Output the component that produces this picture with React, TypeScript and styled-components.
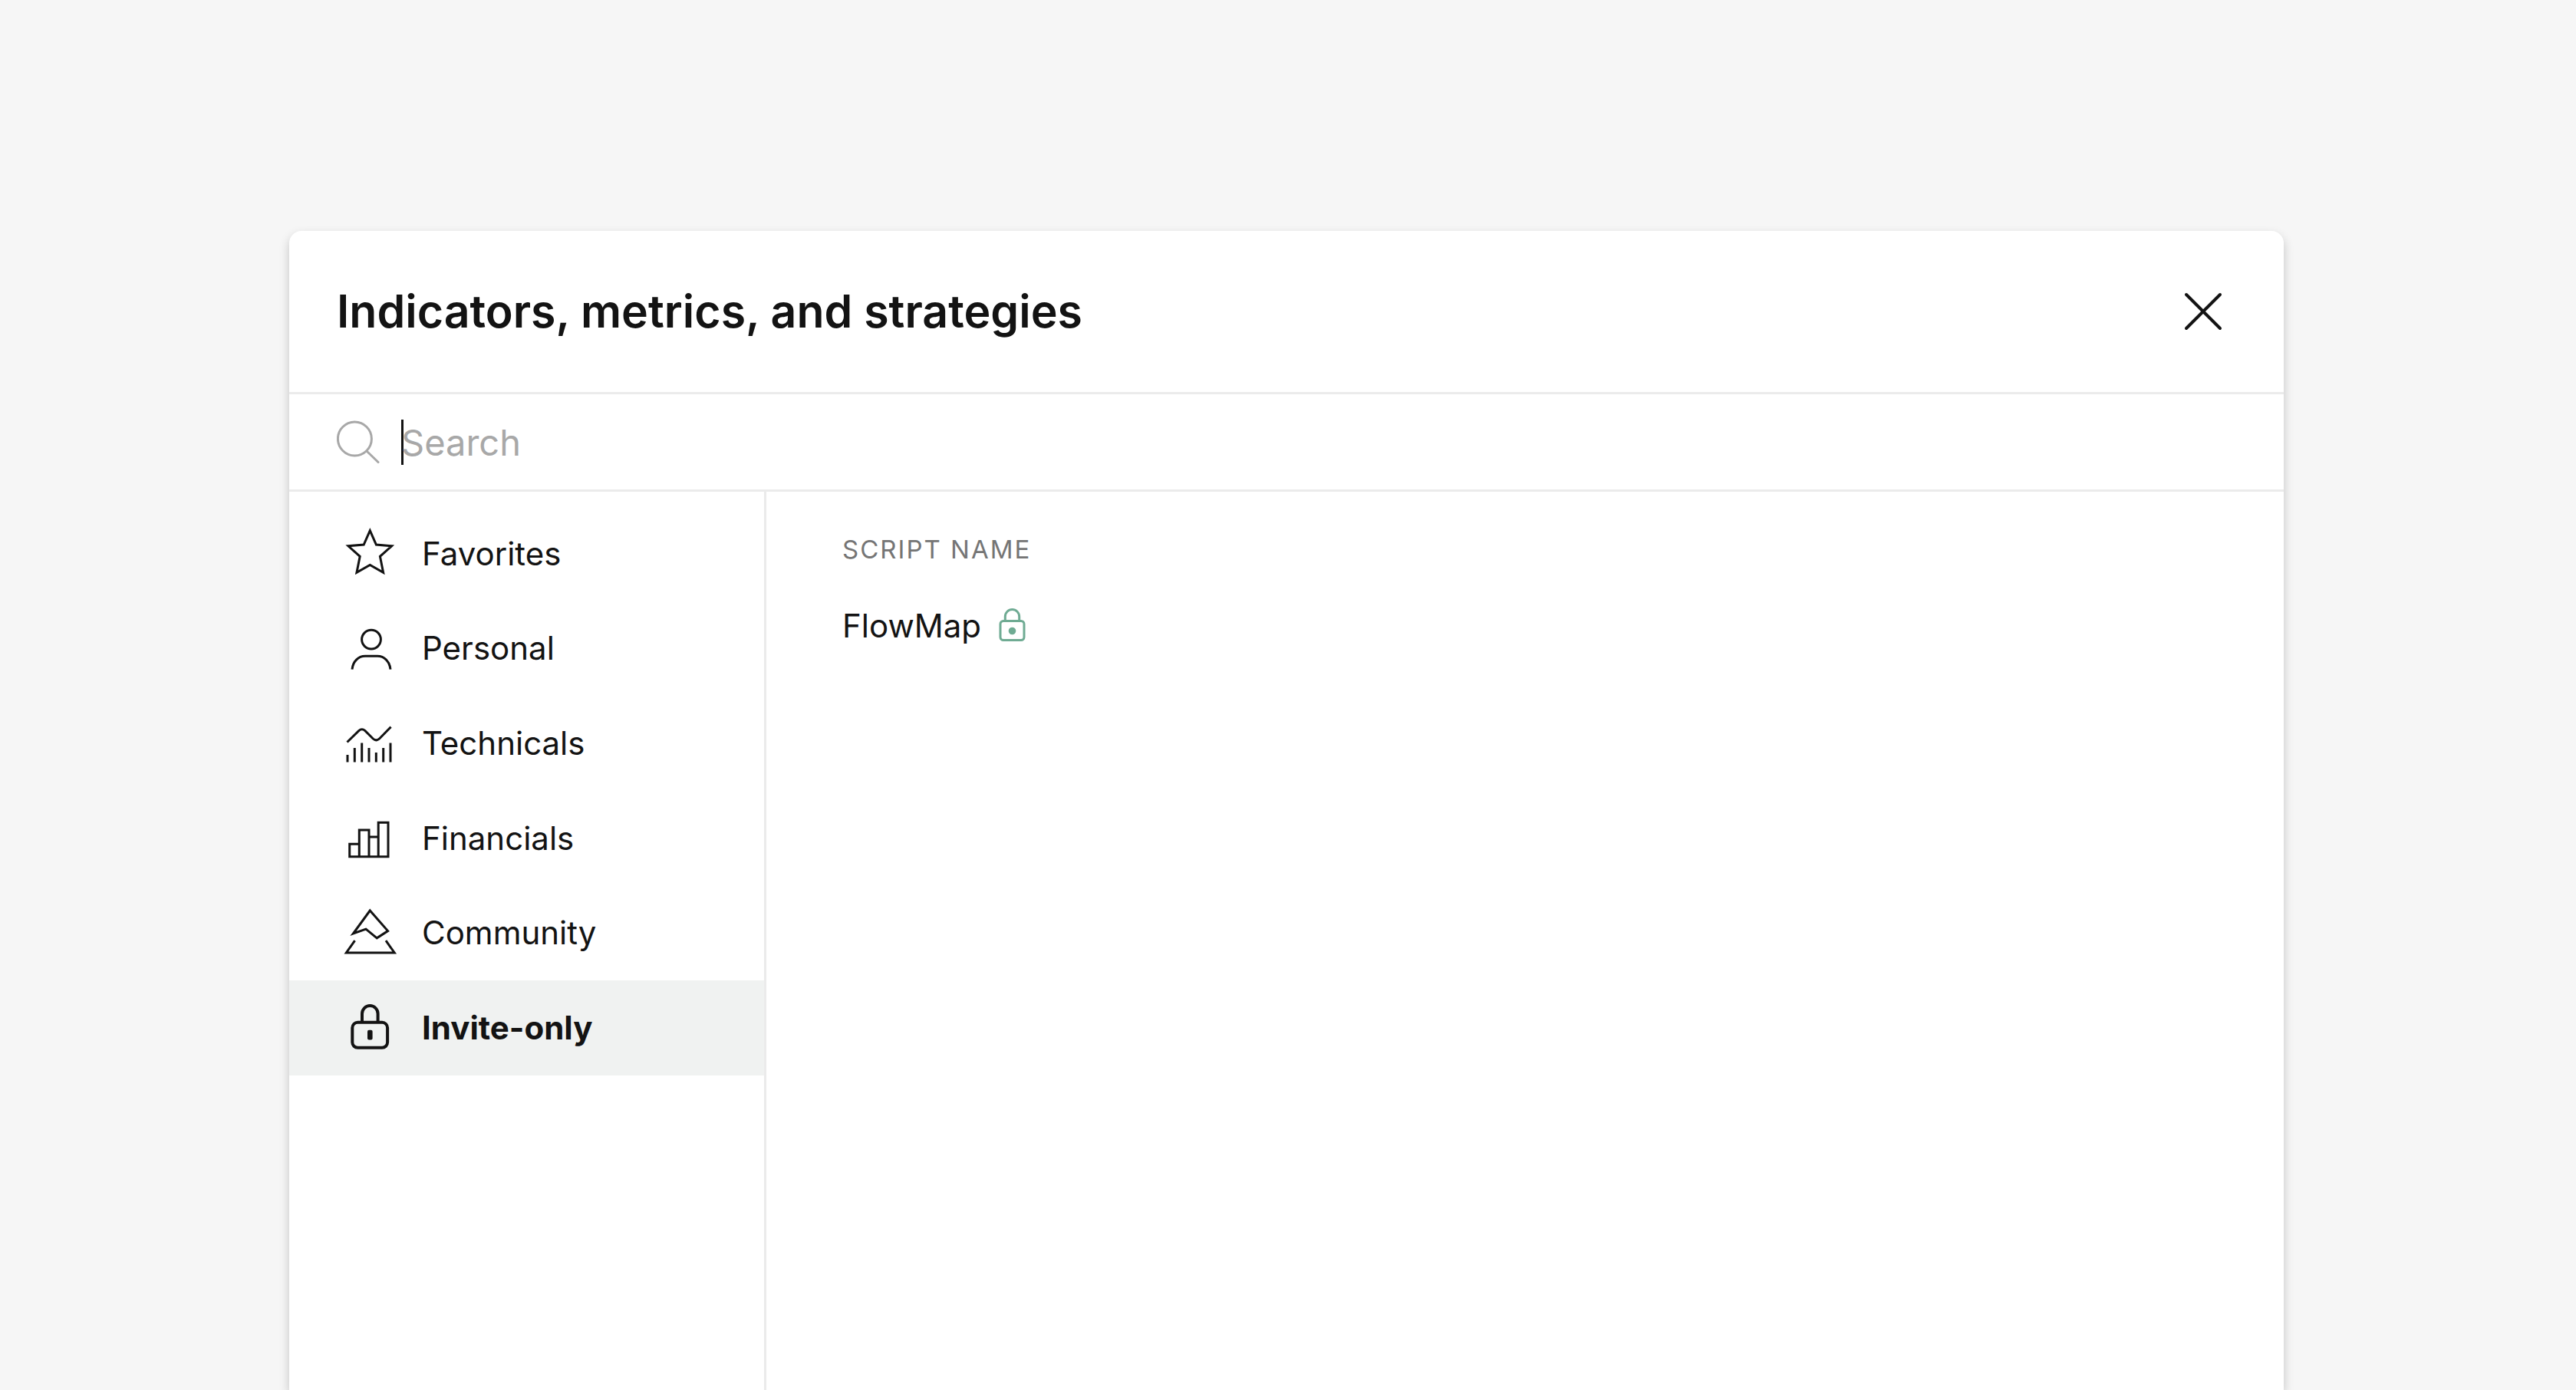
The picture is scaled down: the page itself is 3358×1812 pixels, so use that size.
import React, { useState } from "react";
import styled, { createGlobalStyle } from "styled-components";

const GlobalStyle = createGlobalStyle`
  *, *::before, *::after { box-sizing: border-box; }
  body {
    margin: 0;
    background: #f6f6f6;
    color: #131313;
    font-family: Inter, "Liberation Sans", sans-serif;
  }
  button, input { font: inherit; color: inherit; }
`;

const Page = styled.div`
  display: flex;
  min-height: 100vh;
  padding: 301px 381px 0 377px;
`;

const Dialog = styled.section`
  display: flex;
  flex: 1;
  flex-direction: column;
  min-width: 0;
  background: #fff;
  border-radius: 16px 16px 0 0;
  box-shadow: 0 6px 14px rgba(0, 0, 0, 0.2);
`;

const Header = styled.header`
  display: flex;
  align-items: center;
  justify-content: space-between;
  height: 213px;
  padding: 0 64px 0 62px;
  border-bottom: 3px solid #ebebeb;
`;

const Title = styled.h1`
  margin: 0;
  font-size: 59px;
  font-weight: 600;
  line-height: 82px;
`;

const CloseButton = styled.button`
  display: flex;
  padding: 0;
  border: 0;
  background: none;
  cursor: pointer;
`;

const SearchBar = styled.label`
  display: flex;
  align-items: center;
  height: 127px;
  padding: 0 62px;
  border-bottom: 3px solid #ebebeb;
`;

const SearchIcon = styled.svg`
  flex: none;
  margin-right: 28px;
  color: #a8a8a8;
`;

const Caret = styled.span`
  flex: none;
  width: 3px;
  height: 59px;
  margin-right: -3px;
  background: #131313;
`;

const SearchInput = styled.input`
  flex: 1;
  min-width: 0;
  height: 64px;
  padding: 0;
  border: 0;
  outline: 0;
  background: none;
  font-size: 47px;
  &::placeholder { color: #a8a8a8; opacity: 1; }
`;

const Body = styled.div`
  display: flex;
  flex: 1;
`;

const Sidebar = styled.nav`
  flex: none;
  width: 622px;
  padding-top: 19px;
  border-right: 3px solid #ebebeb;
`;

const CategoryList = styled.ul`
  display: grid;
  grid-auto-rows: 1fr;
  min-height: 742px;
  margin: 0;
  padding: 0;
  list-style: none;
`;

const Category = styled.button<{ $active: boolean }>`
  display: flex;
  align-items: center;
  gap: 31px;
  width: 100%;
  height: 100%;
  padding: 0 68px;
  border: 0;
  background: ${(p) => (p.$active ? "#f0f2f1" : "transparent")};
  font-size: 42px;
  font-weight: ${(p) => (p.$active ? 700 : 400)};
  line-height: 56px;
  text-align: left;
  cursor: pointer;
`;

const Content = styled.main`
  flex: 1;
  padding: 47px 99px;
`;

const ScriptTable = styled.table`
  width: 100%;
  border-collapse: collapse;
  text-align: left;
`;

const HeadCell = styled.th`
  height: 56px;
  padding: 0;
  color: #757575;
  font-size: 33px;
  font-weight: 400;
  letter-spacing: 2px;
  line-height: 56px;
  text-transform: uppercase;
`;

const ScriptCell = styled.td`
  padding: 44px 0 0;
  font-size: 42px;
  line-height: 56px;
`;

const ScriptLink = styled.a`
  display: inline-flex;
  align-items: center;
  gap: 22px;
  color: inherit;
  text-decoration: none;
`;

const LineIcon = ({ weight = 3, children }: { weight?: number; children: React.ReactNode }) => (
  <svg width="74" height="74" viewBox="0 0 74 74" fill="none" stroke="currentColor" strokeWidth={weight} aria-hidden="true">
    {children}
  </svg>
);

const categories = [
  {
    name: "Favorites",
    icon: (
      <LineIcon>
        <path strokeMiterlimit="8" d="M37.3 6.6 45.4 25 65.6 26.8 50.4 40.4 54.6 61.2 37.3 51.4 20 61.2 24.2 40.4 9 26.8 29.2 25Z" />
      </LineIcon>
    ),
  },
  {
    name: "Personal",
    icon: (
      <LineIcon>
        <circle cx="39" cy="25.6" r="12.4" />
        <path d="M14 64.6C15 54.5 22 47.3 31 47.3H47C56 47.3 63 54.5 64 64.6" />
      </LineIcon>
    ),
  },
  {
    name: "Technicals",
    icon: (
      <LineIcon>
        <path d="M7.5 35.5 22.7 20.6Q26.7 17 30.7 20.4L41.3 31Q45.3 34.6 49.3 31.2L64.6 15.6" />
        <path d="M8 61.4V52M17.3 61.4V43M26.7 61.4V36.5M36 61.4V43M45.3 61.4V49M54.7 61.4V43M64 61.4V36.5" />
      </LineIcon>
    ),
  },
  {
    name: "Financials",
    icon: (
      <LineIcon>
        <path d="M10.7 60.7V44.2H23.3V25.9H36V60.7ZM23.3 44V60.7M36 35H48.2M48.2 60.7V16.2H61V60.7H36" />
      </LineIcon>
    ),
  },
  {
    name: "Community",
    icon: (
      <LineIcon>
        <path d="M37.3 8 60.6 34.6 46.3 43.8 32 32.2 15.4 38Z" />
        <path d="M17.6 47.2 6.4 63H69.2L58 47.2" />
      </LineIcon>
    ),
  },
  {
    name: "Invite-only",
    icon: (
      <LineIcon weight={4}>
        <rect x="14.3" y="29.8" width="45.8" height="33" rx="7" />
        <path d="M27 29.8V18.4a10.3 10.3 0 0 1 20.6 0V29.8" />
        <rect x="34" y="39.8" width="6.6" height="12.6" rx="2" fill="currentColor" stroke="none" />
      </LineIcon>
    ),
  },
];

const scripts = ["FlowMap"];

export default function App() {
  const [active, setActive] = useState("Invite-only");
  const [query, setQuery] = useState("");

  return (
    <>
      <GlobalStyle />
      <Page>
        <Dialog role="dialog" aria-labelledby="dialog-title">
          <Header>
            <Title id="dialog-title">Indicators, metrics, and strategies</Title>
            <CloseButton type="button" aria-label="Close">
              <svg width="82" height="82" viewBox="0 0 82 82" fill="none" stroke="currentColor" strokeWidth="4" strokeLinecap="round" aria-hidden="true">
                <path d="M19 19 63 63M63 19 19 63" />
              </svg>
            </CloseButton>
          </Header>
          <SearchBar>
            <SearchIcon width="56" height="58" viewBox="0 0 56 58" fill="none" stroke="currentColor" strokeWidth="3" strokeLinecap="round" aria-hidden="true">
              <circle cx="23.4" cy="25" r="22" />
              <path d="M39 41 54 55.5" />
            </SearchIcon>
            <Caret />
            <SearchInput
              type="text"
              aria-label="Search"
              placeholder="Search"
              value={query}
              onChange={(e) => setQuery(e.target.value)}
            />
          </SearchBar>
          <Body>
            <Sidebar aria-label="Categories">
              <CategoryList>
                {categories.map(({ name, icon }) => (
                  <li key={name}>
                    <Category type="button" $active={name === active} onClick={() => setActive(name)}>
                      {icon}
                      {name}
                    </Category>
                  </li>
                ))}
              </CategoryList>
            </Sidebar>
            <Content>
              <ScriptTable>
                <thead>
                  <tr>
                    <HeadCell scope="col">Script name</HeadCell>
                  </tr>
                </thead>
                <tbody>
                  {scripts.map((script) => (
                    <tr key={script}>
                      <ScriptCell>
                        <ScriptLink href="#">
                          {script}
                          <svg width="38" height="46" viewBox="0 0 38 46" fill="none" stroke="#6fab93" strokeWidth="3" aria-hidden="true">
                            <rect x="3" y="16.5" width="31" height="25" rx="4" />
                            <path d="M9.3 16.5V10.7a9.2 9.2 0 0 1 18.4 0V16.5" />
                            <circle cx="18.5" cy="29.5" r="4.8" fill="#6fab93" stroke="none" />
                          </svg>
                        </ScriptLink>
                      </ScriptCell>
                    </tr>
                  ))}
                </tbody>
              </ScriptTable>
            </Content>
          </Body>
        </Dialog>
      </Page>
    </>
  );
}
